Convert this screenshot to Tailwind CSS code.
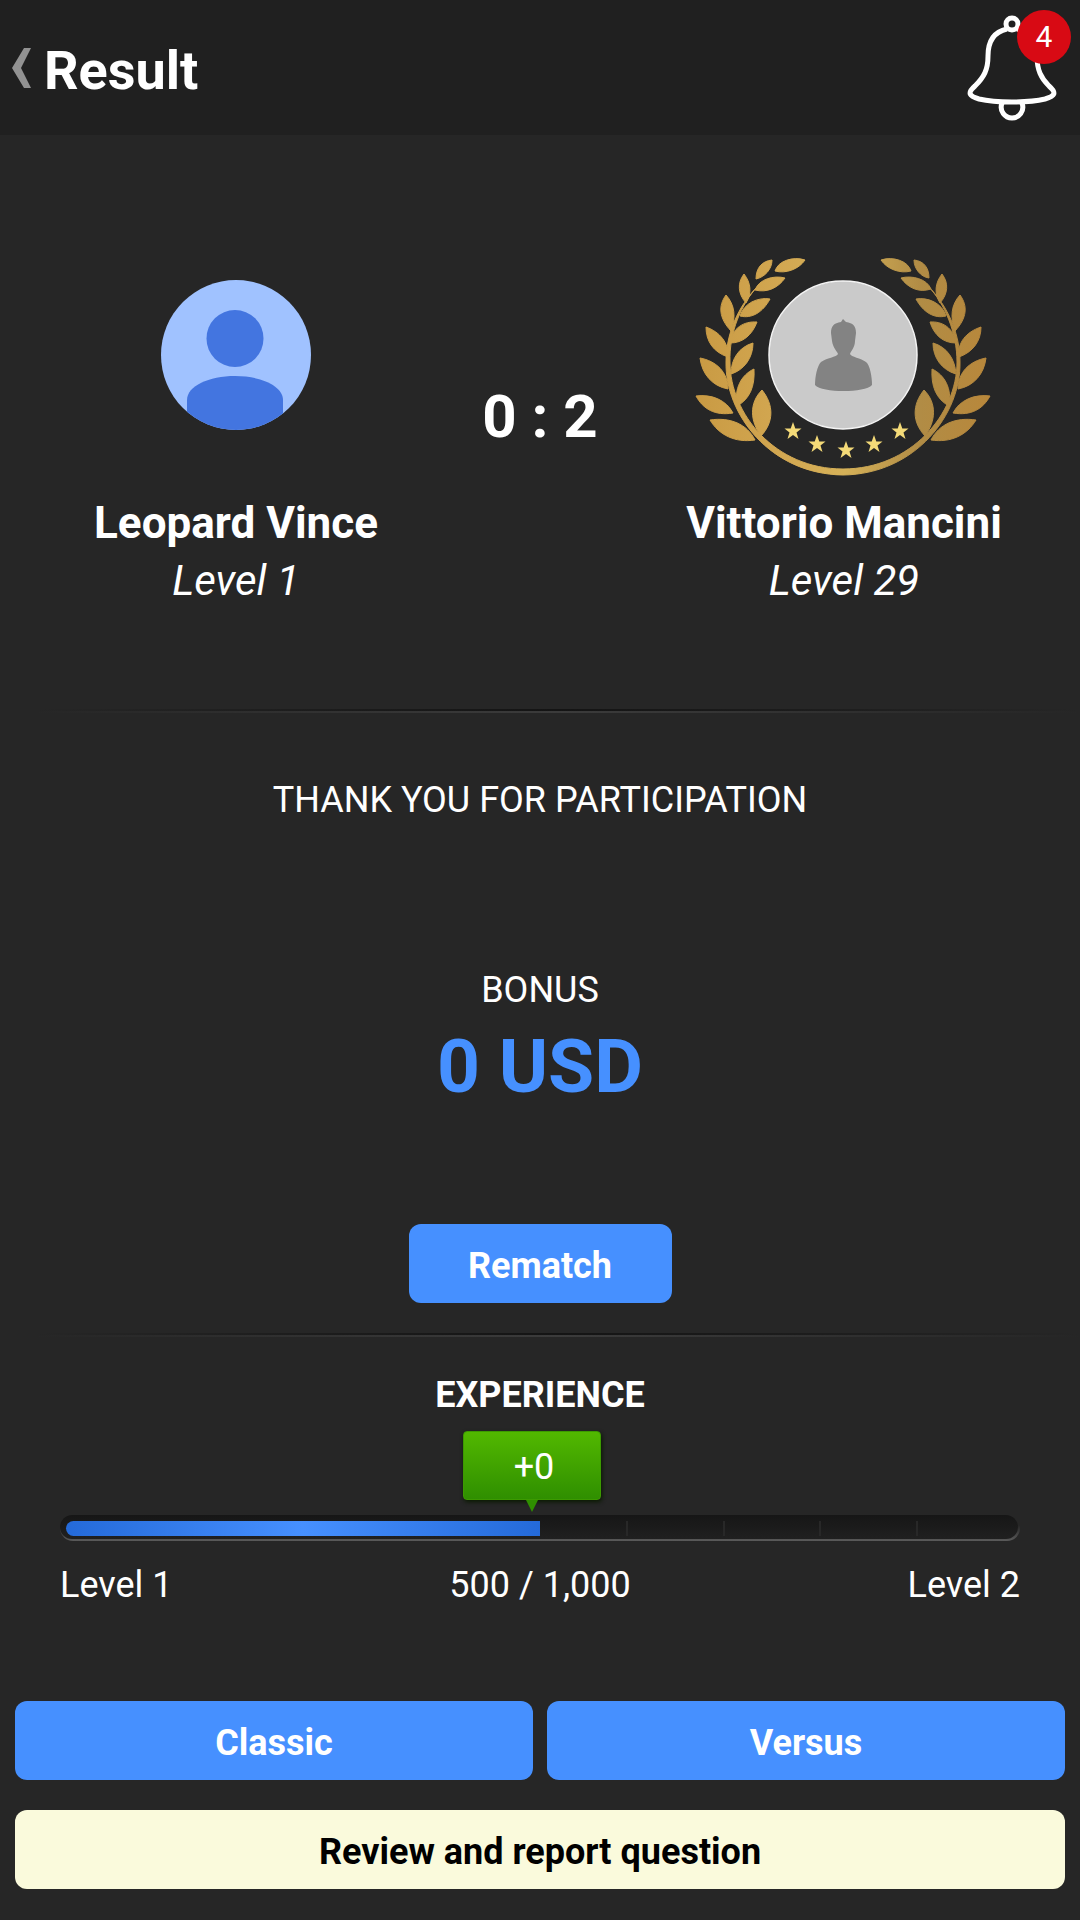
<!DOCTYPE html>
<html lang="en">
<head>
<meta charset="utf-8">
<meta name="viewport" content="width=device-width, initial-scale=1">
<title>Result</title>
<script src="https://cdn.jsdelivr.net/npm/@tailwindcss/browser@4"></script>
</head>
<body class="min-h-screen bg-[#262626] font-[Roboto,sans-serif] text-white">
<div class="flex min-h-screen flex-col">
  <header class="flex h-[135px] items-center justify-between bg-[#202020] pr-[9px] pl-3">
    <div class="flex items-center gap-3">
      <a href="#" aria-label="Back">
        <svg class="h-[42px] w-5" viewBox="0 0 20 42" fill="#929292"><path d="M12 1h7L9 21l10 20h-7L0 21z"/></svg>
      </a>
      <h1 class="pt-[6px] text-[54px] leading-[64px] font-bold">Result</h1>
    </div>
    <button class="relative h-[116px] w-[106px]" aria-label="Notifications, 4 new">
      <svg class="h-full w-full" viewBox="0 0 106 116" fill="none" stroke="#fff" stroke-width="5">
        <circle cx="47" cy="14" r="6"/>
        <path d="M42 19C28 22 23 33 23 46C23 60 19 67 10 76C2 83 4 86 14 89C31 93 63 93 80 89C90 86 92 83 84 76C76 68 72 60 72 46C71 33 65 22 52 19"/>
        <path d="M37 93c-3 8 3 15 10 15s13-7 10-15"/>
      </svg>
      <span class="absolute top-0 right-0 flex size-[54px] items-center justify-center rounded-full bg-[#d80a14] text-[30px] leading-none">4</span>
    </button>
  </header>

  <main class="flex flex-1 flex-col">
    <section class="grid grid-cols-[1fr_136px_1fr] pt-[120px]">
      <div class="flex flex-col items-center">
        <div class="flex h-[228px] items-start justify-center pt-[25px]">
          <svg class="size-[150px]" viewBox="0 0 150 150">
            <defs><clipPath id="face"><circle cx="75" cy="75" r="75"/></clipPath></defs>
            <g clip-path="url(#face)"><path fill="#a0c2ff" d="M0 0h150v150H0z"/><g fill="#4375e0"><circle cx="74" cy="58.500" r="28.500"/><path d="M26 150v-30C26 106 48 96 74 96s48 10 48 24v30z"/></g></g>
          </svg>
        </div>
        <h2 class="mt-3 text-[44px] leading-[56px] font-bold whitespace-nowrap">Leopard Vince</h2>
        <p class="text-[42px] leading-[60px] italic">Level 1</p>
      </div>
      <p class="pt-[127px] text-center text-[60px] leading-[70px] font-bold whitespace-nowrap">0 : 2</p>
      <div class="flex flex-col items-center">
        <div class="flex h-[228px] items-end">
          <svg class="h-[226px] w-[298px]" viewBox="0 0 298 226">
            <defs>
              <linearGradient id="gold" gradientUnits="userSpaceOnUse" x1="0" y1="0" x2="300" y2="0"><stop offset="0" stop-color="#c99a43"/><stop offset=".3" stop-color="#d3a852"/><stop offset=".5" stop-color="#d5b158"/><stop offset=".75" stop-color="#b18c45"/><stop offset="1" stop-color="#b9873a"/></linearGradient>
              <path id="star" d="M0-9 2.300-2.500 8.500-2.500 3.500 1.500 5.500 8 0 4-5.500 8-3.500 1.500-8.500-2.500-2.300-2.500z"/>
            </defs>
            <g fill="url(#gold)" stroke="url(#gold)" stroke-width="1">
              <path d="M110 3C98-1 83 4 80 14C91 17 104 12 110 3z"/>
              <path d="M77 3C67 4 61 11 61 22C70 20 77 12 77 3z"/>
              <path d="M90 21C79 18 64 22 60 33C72 36 83 31 90 21z"/>
              <path d="M49 17C42 26 43 37 51 46C57 36 56 26 49 17z"/>
              <path d="M75 42C63 40 49 46 45 59C57 62 68 55 75 42z"/>
              <path d="M31 38C23 49 24 61 36 74C41 60 40 48 31 38z"/>
              <path d="M62 65C49 64 37 71 35 86C48 86 57 78 62 65z"/>
              <path d="M11 70C11 84 18 95 33 100C34 86 25 75 11 70z"/>
              <path d="M58 86C44 90 36 102 36 117C49 113 58 101 58 86z"/>
              <path d="M5 101C7 117 17 129 33 132C33 115 21 104 5 101z"/>
              <path d="M59 112C46 118 39 132 42 149C55 142 60 129 59 112z"/>
              <path d="M1 139C8 152 20 159 38 156C31 143 17 137 1 139z"/>
              <path d="M67 133C54 146 55 164 66 179C79 165 79 148 67 133z"/>
              <path d="M15 163C24 178 40 186 60 183C52 167 35 160 15 163z"/>
              <path d="M186 3C198-1 213 4 216 14C205 17 192 12 186 3z"/>
              <path d="M219 3C229 4 234 11 234 21C226 20 219 12 219 3z"/>
              <path d="M206 21C217 18 232 22 236 32C224 36 213 31 206 21z"/>
              <path d="M247 17C254 26 253 37 245 46C239 36 240 26 247 17z"/>
              <path d="M221 42C233 40 247 46 251 59C239 62 228 55 221 42z"/>
              <path d="M265 38C273 49 272 61 260 74C255 60 256 48 265 38z"/>
              <path d="M235 65C247 64 259 71 261 86C248 86 239 78 235 65z"/>
              <path d="M286 70C286 84 278 95 264 100C262 86 271 75 286 70z"/>
              <path d="M238 86C252 90 260 102 261 117C247 113 238 101 238 86z"/>
              <path d="M291 101C289 117 279 129 263 132C263 115 275 104 291 101z"/>
              <path d="M237 112C250 118 257 132 254 149C241 142 236 129 237 112z"/>
              <path d="M295 139C288 152 276 159 258 156C265 143 279 137 295 139z"/>
              <path d="M229 133C242 146 241 164 230 179C217 165 217 148 229 133z"/>
              <path d="M281 163C272 178 256 186 236 183C244 167 261 160 281 163z"/>
              <path d="M63 29C43 49 31 77 31 105C30 157 75 217 148 218C221 217 266 157 265 105C265 77 253 49 233 29C250 47 262 76 262 105C262 157 216 212 148 212C80 212 35 157 35 105C34 76 46 47 63 29z"/>
            </g>
            <g fill="#f4da78"><use href="#star" x="98" y="174"/><use href="#star" x="122" y="187"/><use href="#star" x="151" y="193"/><use href="#star" x="179" y="187"/><use href="#star" x="205" y="174"/></g>
            <circle cx="148" cy="98" r="74" fill="#cacaca" stroke="#f4f4f4" stroke-width="1.500"/>
            <path fill="#838383" d="M146 65L148 62L151 65C158 66 161 69 161 76L160 84C160 90 156 94 155 97C156 100 166 101 171 105C175 108 177 120 177 128C170 136 127 136 120 128C120 120 122 109 126 105C131 101 142 100 143 97C142 94 138 91 137 84L136 76C136 69 139 66 146 65z"/>
          </svg>
        </div>
        <h2 class="mt-3 text-[44px] leading-[56px] font-bold whitespace-nowrap">Vittorio Mancini</h2>
        <p class="text-[42px] leading-[60px] italic">Level 29</p>
      </div>
    </section>

    <div class="ml-9 mt-[98px] h-1 bg-linear-to-r from-transparent via-[#3b3b3b] to-transparent"><div class="h-[2px] bg-linear-to-r from-[#262626] via-[#141414] to-[#262626]"></div></div>

    <section class="flex flex-col items-center text-center">
      <p class="mt-[65px] text-[36px] leading-[44px]">THANK YOU FOR PARTICIPATION</p>
      <h2 class="mt-[146px] text-[36px] leading-[44px]">BONUS</h2>
      <p class="mt-[10px] text-[75px] leading-[88px] font-bold text-[#4690ff]">0 USD</p>
      <button class="mt-[114px] h-[79px] w-[263px] rounded-xl bg-[#4690ff] pt-1 text-[36px] leading-[44px] font-bold">Rematch</button>
    </section>

    <div class="ml-9 mt-[30px] h-1 bg-linear-to-r from-transparent via-[#3b3b3b] to-transparent"><div class="h-[2px] bg-linear-to-r from-[#262626] via-[#141414] to-[#262626]"></div></div>

    <section class="px-[60px] pt-9">
      <h2 class="text-center text-[36px] leading-[44px] font-bold">EXPERIENCE</h2>
      <div class="mt-[14px] mr-4 flex flex-col items-center">
        <div class="flex h-[69px] w-[138px] items-center justify-center rounded-sm border border-[#3c9a00] bg-linear-to-b from-[#52b800] to-[#2f8f00] pt-[2px] pl-1 text-[36px] leading-[44px] shadow-[1px_2px_4px_#0a1a00]">+0</div>
        <svg class="h-3 w-3" viewBox="0 0 12 12"><path fill="#2f8f00" d="M0 0h12L6 12z"/></svg>
      </div>
      <div class="mt-[3px] rounded-full bg-linear-to-b from-transparent from-40% to-[#5a5a5a] pb-[2px]">
        <div class="mr-[2px] flex h-6 rounded-full bg-linear-to-b from-[#161616] to-[#202020] pt-[6px] pr-1 pb-[3px] pl-[6px]" role="progressbar" aria-label="Experience" aria-valuemin="0" aria-valuemax="1000" aria-valuenow="500">
          <div class="h-[15px] rounded-l-full bg-linear-to-r from-[#246ad9] via-[#4690ff] to-[#246ad9]" style="width:50%"></div>
          <div class="grid h-[15px] flex-1 grid-cols-[88px_1fr_1fr_1fr_1fr] divide-x-2 divide-[#282828]"><i></i><i></i><i></i><i></i><i></i></div>
        </div>
      </div>
      <div class="mt-[22px] grid grid-cols-3 text-[36px] leading-[44px]"><span>Level 1</span><span class="text-center">500 / 1,000</span><span class="text-right">Level 2</span></div>
    </section>

    <nav class="mt-auto grid grid-cols-2 gap-x-[14px] gap-y-[30px] px-[15px] pb-[31px] text-[36px] leading-[44px] font-bold">
      <button class="h-[79px] rounded-xl bg-[#4690ff] pt-1">Classic</button>
      <button class="h-[79px] rounded-xl bg-[#4690ff] pt-1">Versus</button>
      <button class="col-span-2 h-[79px] rounded-xl bg-[#fafadc] pt-1 text-black">Review and report question</button>
    </nav>
  </main>
</div>
</body>
</html>
